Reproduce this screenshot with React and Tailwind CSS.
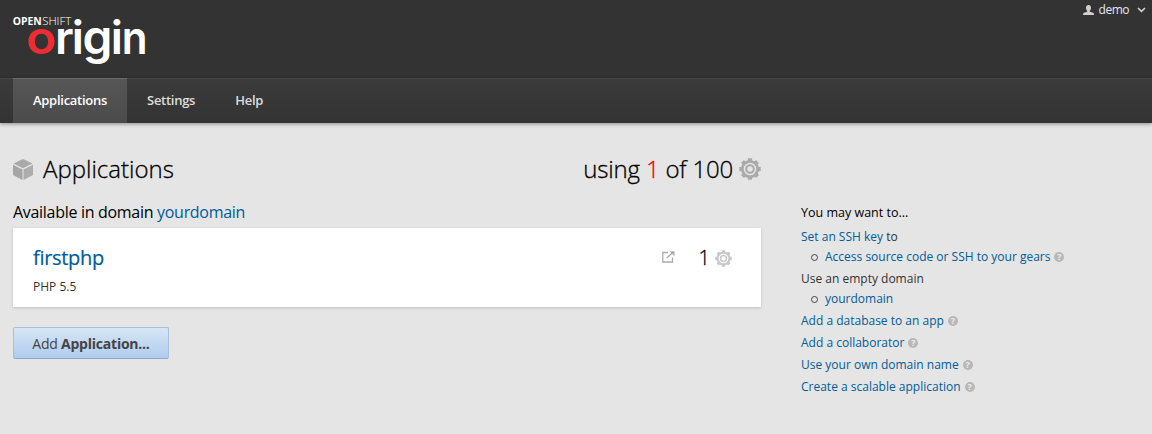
function Gear({ className }) {
  const teeth = [0, 45, 90, 135, 180, 225, 270, 315];
  return (
    <svg className={className} viewBox="0 0 22 22" fill="none" stroke="currentColor">
      <circle cx="11" cy="11" r="7.7" strokeWidth="2.8" />
      <circle cx="11" cy="11" r="3.8" strokeWidth="2" />
      {teeth.map((a) => (
        <path key={a} d="M8.9 1.6H13.1" strokeWidth="2.6" transform={`rotate(${a} 11 11)`} />
      ))}
    </svg>
  );
}

function Logo() {
  return (
    <svg className="h-[78px] w-[136px] overflow-visible" viewBox="0 0 136 78" fill="#fff">
      <g fontFamily="Open Sans, sans-serif" fontSize="10">
        <text x="-0.3" y="25.4" fontWeight="700" textLength="29" lengthAdjust="spacingAndGlyphs">OPEN</text>
        <text x="29.2" y="25.4" fontWeight="300" textLength="29" lengthAdjust="spacingAndGlyphs">SHIFT</text>
      </g>
      <g fontFamily="Inter, sans-serif" fontSize="46.5" fontWeight="600">
        <text x="13.300" y="53.700" fill="#ee2d33" textLength="30.500" lengthAdjust="spacingAndGlyphs">o</text>
        <text x="42" y="53.700">r</text>
        <text x="58.700" y="53.700">i</text>
        <text transform="translate(69.500 53.700) scale(1 1.02)" textLength="30" lengthAdjust="spacingAndGlyphs">g</text>
        <text x="97.800" y="53.700">i</text>
        <text x="108.800" y="53.700" textLength="25.800" lengthAdjust="spacingAndGlyphs">n</text>
      </g>
    </svg>
  );
}

function Help() {
  return (
    <span className="relative -top-px ml-[4px] inline-flex h-[10px] w-[10px] items-center justify-center rounded-full bg-[#b8b8b8] align-middle text-[9px] leading-none font-bold text-[#eee]">?</span>
  );
}

function Link({ children }) {
  return <a href="#" className="text-[#005c99]">{children}</a>;
}

function Sub({ children }) {
  return (
    <div className="flex h-5 items-center">
      <span className="mr-[7px] ml-[10px] h-[7px] w-[7px] rounded-full border-[1.500px] border-[#444]" />
      <span>{children}</span>
    </div>
  );
}

export default function App() {
  return (
    <div className="h-[434px] w-[1152px] overflow-hidden bg-[#e5e5e5] font-['Open_Sans',sans-serif] text-black">
      <header className="flex h-[78px] justify-between bg-[#333] pr-[7px] pl-[13px]">
        <Logo />
        <div className="flex h-[19px] items-center text-[12px] tracking-[-0.5px] text-[#e8e8e8]">
          <svg className="mr-[5px] h-[10px] w-[11px]" viewBox="0 0 11 10" fill="#d0d0d0">
            <path d="M5.5 0C3.8 0 3 1.2 3 2.8c0 1.3.5 2.3 1.2 2.9v1L1 7.8C.3 8.1 0 8.6 0 10h11c0-1.400-.3-1.900-1-2.200L6.800 6.700v-1C7.500 5.100 8 4.100 8 2.800 8 1.200 7.200 0 5.500 0Z" />
          </svg>
          <span>demo</span>
          <svg className="mt-[1px] ml-[8px] -mr-px h-[6px] w-[9px]" viewBox="0 0 9 6" fill="none" stroke="#d0d0d0" strokeWidth="1.7"><path d="m1 1 3.500 3.300L8 1" /></svg>
        </div>
      </header>
      <nav className="flex h-[45px] border-t border-[#454545] bg-linear-to-b from-[#3b3b3b] to-[#333] pl-[13px] text-[13px] font-semibold tracking-[-0.27px] text-[#ddd] shadow-[0_1px_4px_rgba(0,0,0,0.4)]">
        <a href="#" className="-mt-px flex w-[114px] items-center justify-center border-t border-[#6a6a6a] bg-linear-to-b from-[#565656] to-[#4b4b4b] text-white">Applications</a>
        <a href="#" className="flex items-center pl-5">Settings</a>
        <a href="#" className="flex items-center pl-10">Help</a>
      </nav>
      <div className="flex pl-[13px]">
        <main className="w-[748px]">
          <div className="mt-[28px] flex h-[36px] items-center justify-between text-[24px] font-light [-webkit-text-stroke:0.3px]">
            <h1 className="flex items-center">
              <svg className="mr-[10px] h-[21px] w-[20px]" viewBox="0 0 20 21">
                <path d="M10 0 19.500 4.600 10 9.300.5 4.600Z" fill="#aaa" />
                <path d="M0 5.700 9.500 10.400V21L0 16Z" fill="#a6a6a6" />
                <path d="M20 5.700 10.500 10.400V21L20 16Z" fill="#adadad" />
              </svg>
              Applications
            </h1>
            <div className="flex items-center">
              <span className="tracking-[-0.18px]">using <span className="text-[#f00]">1</span> of 100</span>
              <Gear className="ml-[6px] h-[22px] w-[22px] text-[#aaa]" />
            </div>
          </div>
          <h2 className="mt-[13px] h-7 pt-px text-[16px] leading-[23px] tracking-[-0.3px]">Available in domain <Link>yourdomain</Link></h2>
          <section className="h-[79px] bg-white pr-[29px] pl-5 shadow-[0_1px_3px_rgba(0,0,0,0.16)]">
            <div className="flex h-[50px] items-center justify-between pt-[10px]">
              <h3 className="text-[20px] tracking-[-0.3px] [-webkit-text-stroke:0.2px]"><Link>firstphp</Link></h3>
              <div className="flex items-center text-[20px] font-light [-webkit-text-stroke:0.3px]">
                <svg className="mr-6 -mt-[3px] h-[12px] w-[13px]" viewBox="0 0 13 12" fill="none" stroke="#aaa">
                  <path d="M6 1.500H.8v9.500h9.700V6.500M4.800 7 11 1.200" strokeWidth="1.300" />
                  <path d="M7.500.3H12.500V5Z" fill="#aaa" stroke="none" />
                </svg>
                <span>1</span>
                <Gear className="ml-[5px] h-[17px] w-[17px] text-[#c8c8c8]" />
              </div>
            </div>
            <p className="text-[12px] leading-[17px] text-[#333]">PHP 5.5</p>
          </section>
          <button className="mt-5 flex h-8 w-[156px] items-center justify-center rounded-[2px] border border-[#a8bfdc] border-b-[#8eabcd] bg-linear-to-b from-[#d8e5f5] to-[#aeccee] text-[14px] tracking-[-0.23px] text-[#444]">
            <span>Add <b className="font-bold">Application...</b></span>
          </button>
        </main>
        <aside className="ml-[40px] pt-[80px] text-[12px] leading-5 text-[#333]">
          <h4 className="mb-1 text-[12.5px] text-black">You may want to...</h4>
          <div><Link>Set an SSH key</Link> to</div>
          <Sub><Link>Access source code or SSH to your gears</Link><Help /></Sub>
          <div className="mt-[2px]">Use an empty domain</div>
          <Sub><Link>yourdomain</Link></Sub>
          <div className="mt-[2px] h-5"><Link>Add a database to an app</Link><Help /></div>
          <div className="mt-[2px] h-5"><Link>Add a collaborator</Link><Help /></div>
          <div className="mt-[2px] h-5"><Link>Use your own domain name</Link><Help /></div>
          <div className="mt-[2px] h-5"><Link>Create a scalable application</Link><Help /></div>
        </aside>
      </div>
    </div>
  );
}
